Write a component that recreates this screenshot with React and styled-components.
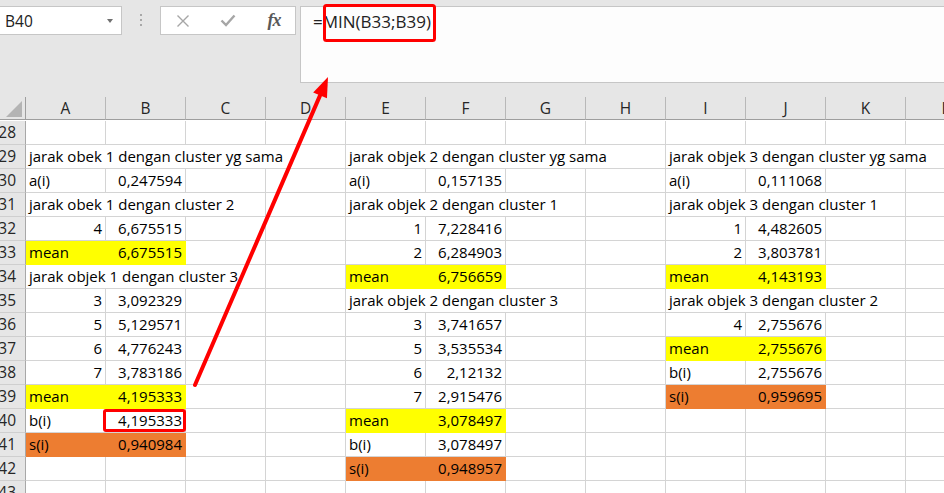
import React from 'react';
import styled, { createGlobalStyle } from 'styled-components';

const GlobalStyle = createGlobalStyle`
  html, body { margin: 0; padding: 0; background: #fff; }
  body { font-family: "Open Sans", "Liberation Sans", Arial, sans-serif; }
`;

const YELLOW = '#ffff00';
const ORANGE = '#ed7d31';

const Page = styled.div`
  position: relative;
  width: 944px;
  height: 493px;
  overflow: hidden;
  background: #fff;
`;

const Ribbon = styled.div`
  display: flex;
  align-items: flex-start;
  height: 97px;
  padding-top: 6px;
  box-sizing: border-box;
  background: #e6e6e6;
`;

const NameBox = styled.div`
  display: flex;
  align-items: center;
  justify-content: space-between;
  width: 123px;
  height: 29px;
  margin-left: -1px;
  padding: 0 8px 0 5px;
  box-sizing: border-box;
  background: #fff;
  border: 1px solid #c6c6c6;
  font-size: 15.5px;
  color: #222;
`;

const Caret = styled.span`
  width: 0;
  height: 0;
  border-left: 3.5px solid transparent;
  border-right: 3.5px solid transparent;
  border-top: 4px solid #707070;
`;

const Grip = styled.div`
  display: flex;
  flex-direction: column;
  align-items: center;
  gap: 3px;
  width: 38px;
  padding-top: 8px;
`;

const Dot = styled.span`
  width: 2px;
  height: 2px;
  background: #a8a8a8;
`;

const IconBox = styled.div`
  display: grid;
  grid-template-columns: 44px 46px 46px;
  align-items: center;
  justify-items: center;
  width: 136px;
  height: 29px;
  box-sizing: border-box;
  background: #fff;
  border: 1px solid #c6c6c6;
`;

const Fx = styled.span`
  font-family: "Liberation Serif", "Times New Roman", serif;
  font-style: italic;
  font-weight: bold;
  font-size: 18px;
  color: #595959;
  letter-spacing: -1px;
`;

const FormulaBox = styled.div`
  flex: 1;
  height: 77px;
  margin-left: 4px;
  margin-right: -1px;
  padding: 4px 12px;
  box-sizing: border-box;
  background: #fdfdfd;
  border: 1px solid #c6c6c6;
  font-size: 17px;
  line-height: 22px;
  color: #222;
`;

const Sheet = styled.div`
  display: grid;
  grid-template-columns: 26px repeat(12, 80px);
  grid-auto-rows: 24px;
  width: max-content;
`;

const ColHead = styled.div`
  display: flex;
  align-items: center;
  justify-content: center;
  height: 23px;
  box-sizing: border-box;
  background: #e6e6e6;
  border-right: 1px solid #b8b8b8;
  border-bottom: 1px solid #9e9e9e;
  font-size: 15.5px;
  color: #262626;
`;

const Corner = styled(ColHead)`
  align-items: flex-end;
  justify-content: flex-end;
  padding: 0 3px 2px 0;
  border-right-color: #9e9e9e;
`;

const RowHead = styled.div`
  display: flex;
  align-items: flex-end;
  justify-content: flex-end;
  padding: 0 9px 2px 0;
  box-sizing: border-box;
  background: #e6e6e6;
  border-right: 1px solid #a8a8a8;
  border-bottom: 1px solid #cfcfcf;
  font-size: 15.5px;
  line-height: 20px;
  color: #262626;
  overflow: hidden;
`;

const Cell = styled.div`
  grid-column: span ${p => p.$span};
  display: flex;
  align-items: flex-end;
  justify-content: ${p => (p.$align === 'right' ? 'flex-end' : 'flex-start')};
  padding: 0 3px 2px;
  box-sizing: border-box;
  background: ${p => p.$bg || '#fff'};
  border-right: 1px solid ${p => p.$bg || '#d4d4d4'};
  border-bottom: 1px solid ${p => p.$bg || '#d4d4d4'};
  font-size: 15px;
  line-height: 20px;
  color: #000;
  white-space: nowrap;
`;

const Overlay = styled.svg`
  position: absolute;
  top: 0;
  left: 0;
  pointer-events: none;
`;

const COLS = ['A', 'B', 'C', 'D', 'E', 'F', 'G', 'H', 'I', 'J', 'K', 'L'];

const L = (c, t, span = 1, bg) => ({ c, t, span, bg, align: 'left' });
const R = (c, t, bg) => ({ c, t, span: 1, bg, align: 'right' });

const rows = [
  [28, []],
  [29, [L(0, 'jarak obek 1 dengan cluster yg sama', 4), L(4, 'jarak objek 2 dengan cluster yg sama', 4), L(8, 'jarak objek 3 dengan cluster yg sama', 4)]],
  [30, [L(0, 'a(i)'), R(1, '0,247594'), L(4, 'a(i)'), R(5, '0,157135'), L(8, 'a(i)'), R(9, '0,111068')]],
  [31, [L(0, 'jarak obek 1 dengan cluster 2', 3), L(4, 'jarak objek 2 dengan cluster 1', 3), L(8, 'jarak objek 3 dengan cluster 1', 3)]],
  [32, [R(0, '4'), R(1, '6,675515'), R(4, '1'), R(5, '7,228416'), R(8, '1'), R(9, '4,482605')]],
  [33, [L(0, 'mean', 1, YELLOW), R(1, '6,675515', YELLOW), R(4, '2'), R(5, '6,284903'), R(8, '2'), R(9, '3,803781')]],
  [34, [L(0, 'jarak objek 1 dengan cluster 3', 3), L(4, 'mean', 1, YELLOW), R(5, '6,756659', YELLOW), L(8, 'mean', 1, YELLOW), R(9, '4,143193', YELLOW)]],
  [35, [R(0, '3'), R(1, '3,092329'), L(4, 'jarak objek 2 dengan cluster 3', 3), L(8, 'jarak objek 3 dengan cluster 2', 3)]],
  [36, [R(0, '5'), R(1, '5,129571'), R(4, '3'), R(5, '3,741657'), R(8, '4'), R(9, '2,755676')]],
  [37, [R(0, '6'), R(1, '4,776243'), R(4, '5'), R(5, '3,535534'), L(8, 'mean', 1, YELLOW), R(9, '2,755676', YELLOW)]],
  [38, [R(0, '7'), R(1, '3,783186'), R(4, '6'), R(5, '2,12132'), L(8, 'b(i)'), R(9, '2,755676')]],
  [39, [L(0, 'mean', 1, YELLOW), R(1, '4,195333', YELLOW), R(4, '7'), R(5, '2,915476'), L(8, 's(i)', 1, ORANGE), R(9, '0,959695', ORANGE)]],
  [40, [L(0, 'b(i)'), R(1, '4,195333'), L(4, 'mean', 1, YELLOW), R(5, '3,078497', YELLOW)]],
  [41, [L(0, 's(i)', 1, ORANGE), R(1, '0,940984', ORANGE), L(4, 'b(i)'), R(5, '3,078497')]],
  [42, [L(4, 's(i)', 1, ORANGE), R(5, '0,948957', ORANGE)]],
  [43, []],
];

const fillRow = cells => {
  const out = [];
  let c = 0;
  while (c < COLS.length) {
    const hit = cells.find(x => x.c === c);
    if (hit) {
      out.push(hit);
      c += hit.span;
    } else {
      out.push({ c, t: '', span: 1, align: 'left' });
      c += 1;
    }
  }
  return out;
};

const CancelIcon = () => (
  <svg width="14" height="14" viewBox="0 0 14 14">
    <path d="M1.5 1.5 L12.5 12.5 M12.5 1.5 L1.5 12.5" stroke="#a6a6a6" strokeWidth="1.4" fill="none" />
  </svg>
);

const EnterIcon = () => (
  <svg width="16" height="13" viewBox="0 0 16 13">
    <path d="M1.5 6.5 L6 11 L14.5 1.5" stroke="#a6a6a6" strokeWidth="2.4" fill="none" />
  </svg>
);

const Annotations = () => {
  const tip = [328, 77];
  const u = [0.397, -0.918];
  const n = [0.918, 0.397];
  const base = [tip[0] - 20 * u[0], tip[1] - 20 * u[1]];
  const a = [base[0] + 7.5 * n[0], base[1] + 7.5 * n[1]];
  const b = [base[0] - 7.5 * n[0], base[1] - 7.5 * n[1]];
  return (
    <Overlay width="944" height="493" viewBox="0 0 944 493">
      <rect x="324.5" y="5.5" width="110" height="35" rx="2" fill="none" stroke="#ff0000" strokeWidth="3" />
      <rect x="104.5" y="410.5" width="80" height="20" rx="1.5" fill="none" stroke="#ff0000" strokeWidth="3" />
      <line x1="195" y1="385" x2={base[0]} y2={base[1]} stroke="#ff0000" strokeWidth="4" strokeLinecap="round" />
      <polygon points={`${tip[0]},${tip[1]} ${a[0]},${a[1]} ${b[0]},${b[1]}`} fill="#ff0000" />
    </Overlay>
  );
};

const App = () => (
  <Page>
    <GlobalStyle />
    <Ribbon>
      <NameBox>
        B40
        <Caret />
      </NameBox>
      <Grip>
        <Dot />
        <Dot />
        <Dot />
      </Grip>
      <IconBox>
        <CancelIcon />
        <EnterIcon />
        <Fx>fx</Fx>
      </IconBox>
      <FormulaBox>=MIN(B33;B39)</FormulaBox>
    </Ribbon>
    <Sheet>
      <Corner>
        <svg width="16" height="16" viewBox="0 0 16 16">
          <polygon points="16,0 16,16 0,16" fill="#b4b4b4" />
        </svg>
      </Corner>
      {COLS.map(c => (
        <ColHead key={c}>{c}</ColHead>
      ))}
      {rows.map(([num, cells]) => (
        <React.Fragment key={num}>
          <RowHead>{num}</RowHead>
          {fillRow(cells).map(cell => (
            <Cell key={cell.c} $span={cell.span} $align={cell.align} $bg={cell.bg}>
              {cell.t}
            </Cell>
          ))}
        </React.Fragment>
      ))}
    </Sheet>
    <Annotations />
  </Page>
);

export default App;
